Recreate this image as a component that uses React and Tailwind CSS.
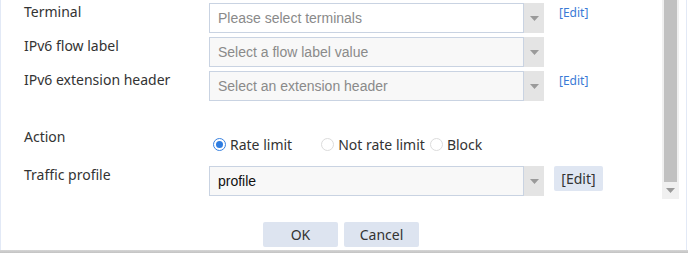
import React from "react";

const labelFont = { fontFamily: '"Noto Sans", "Open Sans", sans-serif' };
const inputFont = { fontFamily: '"Liberation Sans", Arial, sans-serif' };

function Caret({ className = "" }) {
    return (
        <svg className={className} width="9" height="5" viewBox="0 0 9 5">
            <path d="M0 0h9L4.5 5z" fill="#9a9a9a" />
        </svg>
    );
}

function SelectBox({ text, disabled, dark }) {
    return (
        <div className="flex h-[30px] w-[335px]">
            <div
                className={`flex-1 flex items-center border border-[#c9d3e2] pl-[8px] text-[14px] ${
                    disabled ? "bg-[#f8f8f8]" : "bg-white"
                } ${dark ? "text-[#111]" : "text-[#8a8a8a]"}`}
                style={inputFont}
            >
                {text}
            </div>
            <div className="w-[20px] bg-[#e4e4e4] flex items-center justify-center">
                <Caret />
            </div>
        </div>
    );
}

function EditLink() {
    return (
        <span className="text-[12px] text-[#3a7ad6] ml-[15px] mt-[3px] leading-[14px]" style={labelFont}>
            [Edit]
        </span>
    );
}

function Radio({ checked, label, className = "" }) {
    return (
        <label className={`flex items-center ${className}`}>
            <span
                className={`w-[13px] h-[13px] rounded-full border flex items-center justify-center ${
                    checked ? "border-[#3a82e0]" : "border-[#dcdcdc]"
                } bg-white`}
            >
                {checked && <span className="w-[7px] h-[7px] rounded-full bg-[#2f7de1]" />}
            </span>
            <span className="ml-[4px] text-[14px] text-[#333]" style={labelFont}>
                {label}
            </span>
        </label>
    );
}

function Row({ label, children, className = "" }) {
    return (
        <div className={`flex ${className}`}>
            <div className="w-[185px] text-[14px] text-[#333] leading-[18px]" style={labelFont}>
                {label}
            </div>
            {children}
        </div>
    );
}

export default function App() {
    return (
        <div className="w-[688px] h-[253px] bg-white overflow-hidden">
            <div className="w-[687px] h-[250px] border-x border-[#e2e9f6] flex flex-col">
                <div className="h-[199px] flex">
                    <div className="flex-1 pl-[23px] pt-[3px]">
                        <Row label="Terminal">
                            <SelectBox text="Please select terminals" />
                            <EditLink />
                        </Row>
                        <Row label="IPv6 flow label" className="mt-[4px]">
                            <SelectBox text="Select a flow label value" disabled />
                        </Row>
                        <Row label="IPv6 extension header" className="mt-[4px]">
                            <SelectBox text="Select an extension header" disabled />
                            <EditLink />
                        </Row>
                        <Row label="Action" className="mt-[27px] h-[32px]">
                            <div className="flex items-center pl-[4px] pt-[12px] h-[20px]">
                                <Radio checked label="Rate limit" />
                                <Radio label="Not rate limit" className="ml-[29px]" />
                                <Radio label="Block" className="ml-[5px]" />
                            </div>
                        </Row>
                        <Row label="Traffic profile" className="mt-[6px]">
                            <SelectBox text="profile" disabled dark />
                            <button
                                className="ml-[10px] h-[25px] w-[49px] rounded-[2px] bg-[#dfe6f2] text-[14px] text-[#333]"
                                style={labelFont}
                            >
                                [Edit]
                            </button>
                        </Row>
                    </div>
                    <div className="w-[17px] bg-[#f0f0f0] flex flex-col items-center">
                        <div className="w-[13px] h-[182px] bg-[#c1c1c1]" />
                        <Caret className="mt-[6px]" />
                    </div>
                    <div className="w-[7px]" />
                </div>
                <div className="flex-1 flex justify-center gap-[6px] pt-[23px] pr-[5px]">
                    <button
                        className="w-[75px] h-[25px] rounded-[2px] bg-[#dde4f0] text-[14px] text-[#333]"
                        style={labelFont}
                    >
                        OK
                    </button>
                    <button
                        className="w-[75px] h-[25px] rounded-[2px] bg-[#dde4f0] text-[14px] text-[#333]"
                        style={labelFont}
                    >
                        Cancel
                    </button>
                </div>
            </div>
            <div className="h-[3px] bg-gradient-to-b from-[#d6d6d6] to-[#c2c2c2]" />
        </div>
    );
}
